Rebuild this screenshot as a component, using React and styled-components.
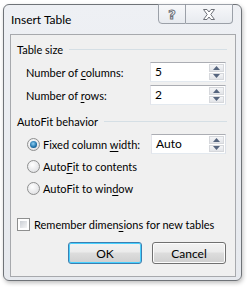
import React from 'react';
import styled, { createGlobalStyle } from 'styled-components';

const GlobalStyle = createGlobalStyle`
  body {
    margin: 0;
    background: #ffffff;
    font-family: Lato, "Liberation Sans", sans-serif;
    font-size: 11px;
    color: #000;
  }
`;

const Page = styled.div`
  width: 247px;
  height: 287px;
  padding: 4px 5px 0 3px;
  box-sizing: border-box;
`;

const Window = styled.div`
  width: 239px;
  height: 277px;
  box-sizing: border-box;
  border: 1px solid #6f7378;
  border-radius: 6px;
  background: linear-gradient(#eef0f4, #e6e9ee);
  box-shadow: 1px 2px 4px rgba(0, 0, 0, 0.25);
  display: flex;
  flex-direction: column;
  padding: 0 5px 3px 6px;
`;

const TitleBar = styled.div`
  height: 29px;
  display: flex;
  align-items: flex-start;
  justify-content: space-between;
`;

const Title = styled.span`
  margin-top: 7px;
  margin-left: 1px;
  font-size: 12px;
`;

const Caption = styled.div`
  display: flex;
  margin-right: 3px;
  margin-top: -1px;
`;

const CaptionButton = styled.div`
  width: ${(p) => p.$w}px;
  height: 20px;
  box-sizing: border-box;
  border: 1px solid #9ba0a8;
  border-left-width: ${(p) => (p.$first ? 1 : 0)}px;
  border-radius: ${(p) => (p.$first ? '0 0 0 4px' : '0 0 4px 0')};
  background: linear-gradient(#f7f8fa, #e7eaef);
  display: flex;
  align-items: center;
  justify-content: center;
`;

const Help = styled.span`
  font-family: "DejaVu Sans", sans-serif;
  font-weight: bold;
  font-size: 13px;
  color: #ffffff;
  -webkit-text-stroke: 1px #6e7178;
  line-height: 1;
`;

const Panel = styled.div`
  flex: 1;
  border: 1px solid #a7a9ad;
  background: #f0f0f0;
  padding: 6px 9px 0 6px;
  display: flex;
  flex-direction: column;
`;

const GroupHeader = styled.div`
  height: 16px;
  display: flex;
  align-items: center;
  gap: 6px;
  margin-top: ${(p) => p.$top || 0}px;

  &::after {
    content: '';
    flex: 1;
    height: 1px;
    background: #d5dfe5;
    margin-right: -1px;
  }
`;

const FieldRow = styled.div`
  height: 20px;
  display: flex;
  align-items: center;
  padding-left: ${(p) => p.$indent}px;
  margin-top: ${(p) => p.$top}px;
  white-space: nowrap;
`;

const Label = styled.span`
  flex: 1;
`;

const Key = styled.span`
  text-decoration: underline;
  text-underline-offset: 2px;
`;

const Spin = styled.div`
  width: ${(p) => p.$w}px;
  height: 20px;
  box-sizing: border-box;
  border: 1px solid #abadb3;
  border-color: #abadb3 #dbdfe6 #e3e9ef #e2e3ea;
  background: #fff;
  display: flex;
  align-items: stretch;
  padding: 1px;
`;

const SpinValue = styled.span`
  flex: 1;
  padding-left: 3px;
  line-height: 16px;
  font-size: 12px;
`;

const SpinButtons = styled.div`
  width: 15px;
  display: flex;
  flex-direction: column;
  gap: 1px;
`;

const SpinButton = styled.div`
  flex: 1;
  border: 1px solid #d6d8dc;
  background: linear-gradient(#f4f5f7, #e2e4e8);
  display: flex;
  align-items: center;
  justify-content: center;
`;

const Radio = styled.span`
  width: 13px;
  height: 13px;
  box-sizing: border-box;
  border-radius: 50%;
  border: 1px solid #8e8f8f;
  background: radial-gradient(circle at 40% 35%, #ffffff, #d8d9dc);
  margin-right: 3px;
  display: flex;
  align-items: center;
  justify-content: center;

  &::after {
    content: '';
    display: ${(p) => (p.$checked ? 'block' : 'none')};
    width: 7px;
    height: 7px;
    border-radius: 50%;
    background: radial-gradient(circle at 45% 40%, #8fd0f4, #1b6ea6 60%, #0d3e66);
  }
`;

const Check = styled.span`
  width: 13px;
  height: 13px;
  box-sizing: border-box;
  border: 1px solid #8e8f8f;
  background: #fff;
  padding: 2px;
  margin-right: 4px;

  &::after {
    content: '';
    display: block;
    width: 100%;
    height: 100%;
    background: linear-gradient(135deg, #cbcfd5, #f6f6f6);
  }
`;

const Buttons = styled.div`
  display: flex;
  justify-content: flex-end;
  gap: 10px;
  margin-top: 8px;
`;

const Button = styled.div`
  width: 74px;
  height: 22px;
  box-sizing: border-box;
  border: 1px solid ${(p) => (p.$default ? '#3c7fb1' : '#707070')};
  border-radius: 3px;
  background: linear-gradient(#f2f2f2 0%, #ebebeb 45%, #dddddd 50%, #cfcfcf 100%);
  box-shadow: inset 0 0 0 1px ${(p) => (p.$default ? '#48d1ff' : '#fcfcfc')};
  display: flex;
  align-items: center;
  justify-content: center;
  font-size: 12px;
`;

const Arrow = ({ up }) => (
  <svg width="7" height="4" viewBox="0 0 7 4">
    <path d={up ? 'M0 4 L3.5 0 L7 4 Z' : 'M0 0 L3.5 4 L7 0 Z'} fill="#56657e" />
  </svg>
);

const Spinner = ({ value, width = 76 }) => (
  <Spin $w={width}>
    <SpinValue>{value}</SpinValue>
    <SpinButtons>
      <SpinButton><Arrow up /></SpinButton>
      <SpinButton><Arrow /></SpinButton>
    </SpinButtons>
  </Spin>
);

const CloseIcon = () => (
  <svg width="12" height="11" viewBox="0 0 12 11">
    <path
      d="M0.5 0.5 H4 L6 3 L8 0.5 H11.5 L7.8 5.5 L11.5 10.5 H8 L6 8 L4 10.5 H0.5 L4.2 5.5 Z"
      fill="#ffffff"
      stroke="#6e7178"
      strokeWidth="1"
    />
  </svg>
);

export default function App() {
  return (
    <>
      <GlobalStyle />
      <Page>
        <Window>
          <TitleBar>
            <Title>Insert Table</Title>
            <Caption>
              <CaptionButton $w={28} $first><Help>?</Help></CaptionButton>
              <CaptionButton $w={47}><CloseIcon /></CaptionButton>
            </Caption>
          </TitleBar>
          <Panel>
            <GroupHeader>Table size</GroupHeader>
            <FieldRow $indent={9} $top={5}>
              <Label>Number of <Key>c</Key>olumns:</Label>
              <Spinner value="5" />
            </FieldRow>
            <FieldRow $indent={9} $top={3}>
              <Label>Number of <Key>r</Key>ows:</Label>
              <Spinner value="2" />
            </FieldRow>
            <GroupHeader $top={8}>AutoFit behavior</GroupHeader>
            <FieldRow $indent={10} $top={5}>
              <Radio $checked />
              <Label>Fixed column <Key>w</Key>idth:</Label>
              <Spinner value="Auto" width={75} />
            </FieldRow>
            <FieldRow $indent={10} $top={2}>
              <Radio />
              <Label>Auto<Key>F</Key>it to contents</Label>
            </FieldRow>
            <FieldRow $indent={10} $top={2}>
              <Radio />
              <Label>AutoFit to win<Key>d</Key>ow</Label>
            </FieldRow>
            <FieldRow $indent={0} $top={16}>
              <Check />
              <Label>Remember dimen<Key>s</Key>ions for new tables</Label>
            </FieldRow>
            <Buttons>
              <Button $default>OK</Button>
              <Button>Cancel</Button>
            </Buttons>
          </Panel>
        </Window>
      </Page>
    </>
  );
}
